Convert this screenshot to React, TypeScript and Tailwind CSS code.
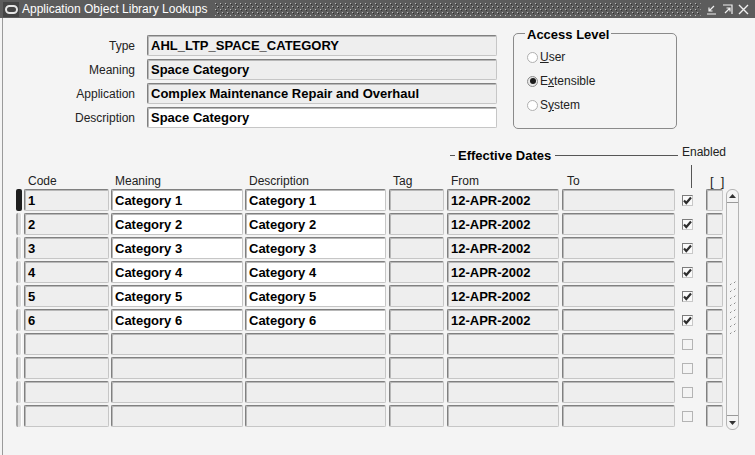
import React from "react";

const field =
  "flex items-center border border-t-[#808080] border-l-[#808080] border-r-[#c6c6c6] border-b-[#c6c6c6] rounded-[2px] shadow-[inset_1px_1px_0_#b8b8b8] pl-[3px] text-[13px] font-bold text-black leading-none whitespace-nowrap overflow-hidden";

type Row = { code: string; meaning: string; desc: string; from: string; on: boolean } | null;

const rows: Row[] = [1, 2, 3, 4, 5, 6]
  .map((n) => ({
    code: String(n),
    meaning: `Category ${n}`,
    desc: `Category ${n}`,
    from: "12-APR-2002",
    on: true,
  }))
  .concat([null, null, null, null] as any);

function Check({ on }: { on: boolean }) {
  if (!on) {
    return <div className="ml-[7px] w-[11px] h-[11px] border border-[#b4b4b4]" />;
  }
  return (
    <div className="ml-[7px] w-[11px] h-[11px] border border-t-[#7c7c7c] border-l-[#7c7c7c] border-r-[#c8c8c8] border-b-[#c8c8c8] bg-[#fafafa] flex items-center justify-center">
      <svg width="9" height="9" viewBox="0 0 9 9">
        <path d="M1 4.5 L3.3 7 L8 1.5" stroke="#2e2e2e" strokeWidth="2.2" fill="none" />
      </svg>
    </div>
  );
}

function Radio({ label, mn, rest, on }: { label?: string; mn: string; rest: string; on?: boolean }) {
  return (
    <div className="flex items-center h-[24px]">
      <div
        className={
          "ml-[2px] w-[11px] h-[11px] rounded-full border flex items-center justify-center " +
          (on ? "border-[#8c8c8c] bg-[#e8e8e8]" : "border-[#b0b0b0] bg-white")
        }
      >
        {on && <div className="w-[6px] h-[6px] rounded-full bg-[#1c1c1c]" />}
      </div>
      <span className="ml-[2px] text-[12px] text-[#222]">
        {label}
        <span className="underline">{mn}</span>
        {rest}
      </span>
    </div>
  );
}

export default function App() {
  return (
    <div className="w-[755px] h-[455px] bg-[#f4f4f4] flex flex-col overflow-hidden font-['Liberation_Sans',Arial,sans-serif]">
      {/* Title bar */}
      <div className="h-[18px] bg-[#5c5c5c] flex items-center shrink-0">
        <div className="ml-[3px] w-[16px] h-[15px] bg-[#444] flex items-center justify-center">
          <svg width="13" height="9" viewBox="0 0 13 9">
            <rect x="1" y="1" width="11" height="7" rx="3.5" stroke="#e6e6e6" strokeWidth="2" fill="none" />
          </svg>
        </div>
        <span className="ml-[3px] text-white text-[12px] leading-none whitespace-nowrap">
          Application Object Library Lookups
        </span>
        <svg className="ml-[8px] flex-1 h-[13px]" height="13">
          <defs>
            <pattern id="dots" width="5" height="6" patternUnits="userSpaceOnUse">
              <rect x="0" y="0" width="1" height="1" fill="#bcbcbc" />
              <rect x="1" y="1" width="1" height="1" fill="#303030" />
              <rect x="2" y="3" width="1" height="1" fill="#bcbcbc" />
              <rect x="3" y="4" width="1" height="1" fill="#303030" />
            </pattern>
          </defs>
          <rect width="100%" height="13" fill="url(#dots)" />
        </svg>
        <div className="flex items-center ml-[5px] mr-[6px] gap-[5px]">
          <svg width="11" height="11" viewBox="0 0 11 11">
            <path d="M8 2 L3 7 M3 3.5 V7 H6.5 M1 10 H10" stroke="#f0f0f0" strokeWidth="1.2" fill="none" />
          </svg>
          <svg width="11" height="11" viewBox="0 0 11 11">
            <path d="M1 1 H10 V10 M3 9 L8 4 M4.5 4 H8 V7.5" stroke="#f0f0f0" strokeWidth="1.2" fill="none" />
          </svg>
          <svg width="11" height="11" viewBox="0 0 11 11">
            <path d="M1 1 L10 10 M10 1 L1 10" stroke="#f0f0f0" strokeWidth="1.4" fill="none" />
          </svg>
        </div>
      </div>

      {/* Body */}
      <div className="flex-1 ml-[2px] border-l border-[#9a9a9a] flex flex-col">
        {/* Header form */}
        <div className="flex items-start mt-[7px]">
          <div className="grid grid-cols-[132px_350px] gap-x-[12px] gap-y-[3px] mt-[10px]">
            <span className="text-right text-[12px] text-[#222] self-center">Type</span>
            <div className={field + " h-[21px] bg-[#eeeeee]"}>AHL_LTP_SPACE_CATEGORY</div>
            <span className="text-right text-[12px] text-[#222] self-center">Meaning</span>
            <div className={field + " h-[21px] bg-[#eeeeee]"}>Space Category</div>
            <span className="text-right text-[12px] text-[#222] self-center">Application</span>
            <div className={field + " h-[21px] bg-[#eeeeee]"}>Complex Maintenance Repair and Overhaul</div>
            <span className="text-right text-[12px] text-[#222] self-center">Description</span>
            <div className={field + " h-[21px] bg-white"}>Space Category</div>
          </div>

          <fieldset className="ml-[16px] -mt-[1px] w-[164px] h-[105px] border border-[#8a8a8a] rounded-[5px] px-[11px]">
            <legend className="px-[2px] pt-[3px] text-[13px] font-bold leading-[15px] text-black">Access Level</legend>
            <div className="mt-[3px] flex flex-col">
              <Radio mn="U" rest="ser" />
              <Radio label="E" mn="x" rest="tensible" on />
              <Radio label="S" mn="y" rest="stem" />
            </div>
          </fieldset>
        </div>

        {/* Table */}
        <div className="ml-[13px] mt-[16px] flex flex-col">
          <div className="flex items-start h-[20px]">
            <div className="w-[431px]" />
            <div className="flex items-center w-[231px] h-[15px] mt-[3px]">
              <div className="ml-[3px] w-[5px] h-px bg-[#555]" />
              <span className="ml-[3px] text-[13px] font-bold leading-[15px] text-black">Effective Dates</span>
              <div className="flex-1 ml-[4px] h-px bg-[#555]" />
            </div>
            <span className="ml-[4px] text-[12px] leading-[14px] text-[#222]">Enabled</span>
          </div>

          <div className="flex items-end h-[24px] text-[12px] leading-[14px] text-[#222]">
            <div className="w-[6px]" />
            <span className="ml-[2px] w-[85px] pl-[4px] pb-px">Code</span>
            <span className="ml-[2px] w-[132px] pl-[4px] pb-px">Meaning</span>
            <span className="ml-[2px] w-[141px] pl-[4px] pb-px">Description</span>
            <span className="ml-[3px] w-[55px] pl-[4px] pb-px">Tag</span>
            <span className="ml-[3px] w-[112px] pl-[4px] pb-px">From</span>
            <span className="ml-[3px] w-[113px] pl-[5px] pb-px">To</span>
            <div className="w-[31px] self-start">
              <div className="ml-[16px] w-px h-[23px] bg-[#555]" />
            </div>
            <span className="w-[22px] pl-[4px] text-[13px] leading-[14px] whitespace-pre">[  ]</span>
          </div>

          <div className="flex items-start">
            <div className="flex flex-col gap-[2px]">
              {rows.map((r, i) => (
                <div key={i} className="flex items-center h-[22px]">
                  <div
                    className={
                      "w-[6px] h-[22px] rounded-[2px] " +
                      (i === 0
                        ? "bg-[#1e1e1e]"
                        : "bg-[#dcdcdc] border-l-2 border-[#a4a4a4] border-r border-r-white")
                    }
                  />
                  <div className={field + " ml-[2px] w-[85px] h-[22px] bg-[#eeeeee]"}>{r?.code}</div>
                  <div className={field + " ml-[2px] w-[132px] h-[22px] " + (r ? "bg-white" : "bg-[#eeeeee]")}>
                    {r?.meaning}
                  </div>
                  <div className={field + " ml-[2px] w-[141px] h-[22px] " + (r ? "bg-white" : "bg-[#eeeeee]")}>
                    {r?.desc}
                  </div>
                  <div className={field + " ml-[3px] w-[55px] h-[22px] bg-[#eeeeee]"} />
                  <div className={field + " ml-[3px] w-[112px] h-[22px] bg-[#eeeeee]"}>{r?.from}</div>
                  <div className={field + " ml-[3px] w-[113px] h-[22px] bg-[#eeeeee]"} />
                  <div className="w-[31px] flex items-center">
                    <Check on={!!r?.on} />
                  </div>
                  <div className={field + " w-[17px] h-[22px] bg-[#eeeeee]"} />
                </div>
              ))}
            </div>

            {/* Scrollbar */}
            <div className="ml-[3px] w-[13px] h-[241px] rounded-[6px] border border-[#b4b4b4] flex flex-col">
              <div className="h-[13px] border-b border-[#9a9a9a] flex items-center justify-center">
                <svg width="7" height="4" viewBox="0 0 7 4">
                  <path d="M0 4 L3.5 0 L7 4 Z" fill="#333" />
                </svg>
              </div>
              <div className="flex-1 flex items-center justify-center">
                <svg width="9" height="56" viewBox="0 0 9 56">
                  {[0, 1, 2, 3, 4, 5, 6, 7].map((k) => (
                    <g key={k}>
                      <rect x="2" y={k * 7 + 3} width="1" height="1" fill="#8a8a8a" />
                      <rect x="3" y={k * 7 + 2} width="1" height="1" fill="#c8c8c8" />
                      <rect x="6" y={k * 7 + 1} width="1" height="1" fill="#8a8a8a" />
                      <rect x="7" y={k * 7} width="1" height="1" fill="#c8c8c8" />
                    </g>
                  ))}
                </svg>
              </div>
              <div className="h-[14px] border-t border-[#9a9a9a] flex items-center justify-center">
                <svg width="7" height="4" viewBox="0 0 7 4">
                  <path d="M0 0 L7 0 L3.5 4 Z" fill="#333" />
                </svg>
              </div>
            </div>
          </div>
        </div>
      </div>
    </div>
  );
}
